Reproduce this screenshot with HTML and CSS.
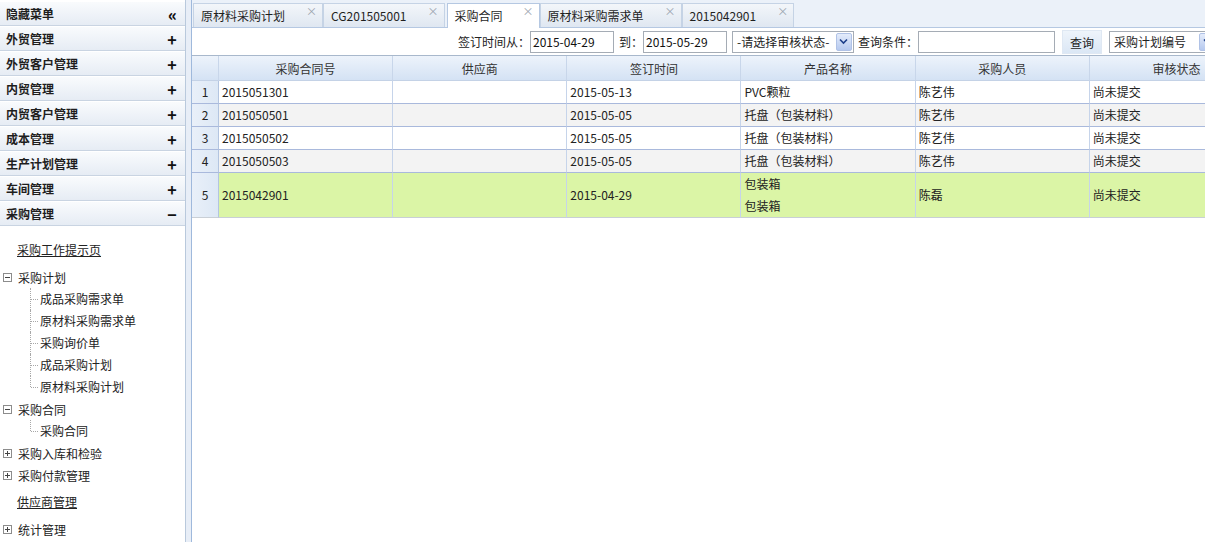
FILE: index.html
```html
<!DOCTYPE html>
<html lang="zh-CN">
<head>
<meta charset="utf-8">
<title>采购合同</title>
<link rel="stylesheet" href="styles.css">
</head>
<body>
<div class="app">
  <aside class="sidebar">
    <div class="menu-head"><span>隐藏菜单</span><span class="mh-icon dbl">«</span></div>
    <div class="menu-head"><span>外贸管理</span><span class="mh-icon">+</span></div>
    <div class="menu-head"><span>外贸客户管理</span><span class="mh-icon">+</span></div>
    <div class="menu-head"><span>内贸管理</span><span class="mh-icon">+</span></div>
    <div class="menu-head"><span>内贸客户管理</span><span class="mh-icon">+</span></div>
    <div class="menu-head"><span>成本管理</span><span class="mh-icon">+</span></div>
    <div class="menu-head"><span>生产计划管理</span><span class="mh-icon">+</span></div>
    <div class="menu-head"><span>车间管理</span><span class="mh-icon">+</span></div>
    <div class="menu-head"><span>采购管理</span><span class="mh-icon minus">−</span></div>
    <div class="tree">
      <div class="t-link">采购工作提示页</div>
      <div class="t-group">
        <svg class="t-box" width="9" height="9" viewBox="0 0 9 9"><rect x="0.5" y="0.5" width="8" height="8" fill="#fff" stroke="#8c8c8c"/><path d="M2 4.5h5" stroke="#444"/></svg>
        <span>采购计划</span>
      </div>
      <div class="t-children">
        <div class="t-item">成品采购需求单</div>
        <div class="t-item">原材料采购需求单</div>
        <div class="t-item">采购询价单</div>
        <div class="t-item">成品采购计划</div>
        <div class="t-item last">原材料采购计划</div>
      </div>
      <div class="t-group">
        <svg class="t-box" width="9" height="9" viewBox="0 0 9 9"><rect x="0.5" y="0.5" width="8" height="8" fill="#fff" stroke="#8c8c8c"/><path d="M2 4.5h5" stroke="#444"/></svg>
        <span>采购合同</span>
      </div>
      <div class="t-children">
        <div class="t-item last">采购合同</div>
      </div>
      <div class="t-group">
        <svg class="t-box" width="9" height="9" viewBox="0 0 9 9"><rect x="0.5" y="0.5" width="8" height="8" fill="#fff" stroke="#8c8c8c"/><path d="M2 4.5h5M4.5 2v5" stroke="#444"/></svg>
        <span>采购入库和检验</span>
      </div>
      <div class="t-group">
        <svg class="t-box" width="9" height="9" viewBox="0 0 9 9"><rect x="0.5" y="0.5" width="8" height="8" fill="#fff" stroke="#8c8c8c"/><path d="M2 4.5h5M4.5 2v5" stroke="#444"/></svg>
        <span>采购付款管理</span>
      </div>
      <div class="t-link">供应商管理</div>
      <div class="t-group">
        <svg class="t-box" width="9" height="9" viewBox="0 0 9 9"><rect x="0.5" y="0.5" width="8" height="8" fill="#fff" stroke="#8c8c8c"/><path d="M2 4.5h5M4.5 2v5" stroke="#444"/></svg>
        <span>统计管理</span>
      </div>
    </div>
  </aside>
  <div class="splitter"></div>
  <main class="main">
    <div class="tabs">
      <div class="tab">原材料采购计划<span class="tab-x">×</span></div>
      <div class="tab">CG201505001<span class="tab-x">×</span></div>
      <div class="tab active">采购合同<span class="tab-x">×</span></div>
      <div class="tab">原材料采购需求单<span class="tab-x">×</span></div>
      <div class="tab">2015042901<span class="tab-x">×</span></div>
    </div>
    <div class="toolbar">
      <span class="lbl">签订时间从：</span>
      <span class="inp w84">2015-04-29</span>
      <span class="lbl ml5">到：</span>
      <span class="inp w84">2015-05-29</span>
      <span class="sel w122 ml5">-请选择审核状态-<span class="sel-arrow"><svg width="9" height="7" viewBox="0 0 9 7"><path d="M1 1.5l3.5 3.5 3.5-3.5" fill="none" stroke="#1d3f8a" stroke-width="1.6"/></svg></span></span>
      <span class="lbl ml4">查询条件：</span>
      <span class="inp w137"></span>
      <span class="btn ml7">查询</span>
      <span class="sel w108 ml7 last">采购计划编号<span class="sel-arrow"><svg width="9" height="7" viewBox="0 0 9 7"><path d="M1 1.5l3.5 3.5 3.5-3.5" fill="none" stroke="#1d3f8a" stroke-width="1.6"/></svg></span></span>
    </div>
    <div class="grid-wrap">
      <table class="grid">
        <thead>
          <tr>
            <th class="rn"></th>
            <th class="c">采购合同号</th>
            <th class="c">供应商</th>
            <th class="c">签订时间</th>
            <th class="c">产品名称</th>
            <th class="c">采购人员</th>
            <th class="c">审核状态</th>
          </tr>
        </thead>
        <tbody>
          <tr>
            <td class="rn">1</td><td>2015051301</td><td></td><td>2015-05-13</td><td>PVC颗粒</td><td>陈艺伟</td><td>尚未提交</td>
          </tr>
          <tr class="alt">
            <td class="rn">2</td><td>2015050501</td><td></td><td>2015-05-05</td><td>托盘（包装材料）</td><td>陈艺伟</td><td>尚未提交</td>
          </tr>
          <tr>
            <td class="rn">3</td><td>2015050502</td><td></td><td>2015-05-05</td><td>托盘（包装材料）</td><td>陈艺伟</td><td>尚未提交</td>
          </tr>
          <tr class="alt">
            <td class="rn">4</td><td>2015050503</td><td></td><td>2015-05-05</td><td>托盘（包装材料）</td><td>陈艺伟</td><td>尚未提交</td>
          </tr>
          <tr class="sel-row">
            <td class="rn">5</td><td>2015042901</td><td></td><td>2015-04-29</td><td><div class="ln">包装箱</div><div class="ln">包装箱</div></td><td>陈磊</td><td>尚未提交</td>
          </tr>
        </tbody>
      </table>
    </div>
  </main>
</div>
</body>
</html>
```

FILE: styles.css
```css
* { box-sizing: border-box; }
html, body { margin: 0; padding: 0; }
body {
  font-family: "Noto Sans CJK SC", "Microsoft YaHei", sans-serif;
  font-size: 12px;
  color: #222;
  background: #fff;
  width: 1205px;
  height: 542px;
  overflow: hidden;
}
.app { display: flex; height: 542px; }

/* sidebar */
.sidebar {
  width: 186px;
  flex: none;
  border-right: 1px solid #b9c9dc;
  padding-top: 1px;
  background: #fff;
  overflow: hidden;
}
.menu-head {
  height: 25px;
  display: flex;
  align-items: center;
  justify-content: space-between;
  padding: 0 7px 0 6px;
  font-weight: bold;
  color: #1e1e1e;
  background: linear-gradient(#f9fbfd, #e6ecf4);
  border-top: 1px solid #fff;
  border-bottom: 1px solid #c9d4e2;
}
.mh-icon { font-size: 16px; font-weight: bold; width: 12px; text-align: center; color: #111; line-height: 1; }
.mh-icon.dbl { font-size: 16px; font-weight: 900; letter-spacing: -1px; }
.mh-icon.minus { font-size: 16px; }

.tree { padding-top: 8px; }
.t-link {
  height: 22px;
  line-height: 22px;
  margin: 5px 0;
  padding-left: 17px;
  text-decoration: underline;
  color: #222;
}
.t-group {
  height: 22px;
  display: flex;
  align-items: center;
  padding-left: 3px;
  color: #222;
}
.t-box { margin-right: 6px; flex: none; }
.t-children { padding-left: 30px; }
.t-item {
  position: relative;
  height: 22px;
  line-height: 22px;
  padding-left: 10px;
}
.t-item::before {
  content: "";
  position: absolute;
  left: 0;
  top: 0;
  bottom: 0;
  border-left: 1px dotted #a8a8a8;
}
.t-item.last::before { bottom: 11px; }
.t-item::after {
  content: "";
  position: absolute;
  left: 1px;
  top: 11px;
  width: 7px;
  border-top: 1px dotted #a8a8a8;
}

.splitter {
  width: 6px;
  flex: none;
  background: #e8eef7;
  border-right: 1px solid #9fb9dc;
}

/* main */
.main {
  flex: 1;
  min-width: 0;
  overflow: hidden;
  display: flex;
  flex-direction: column;
}
.tabs {
  height: 28px;
  flex: none;
  display: flex;
  align-items: flex-end;
  gap: 0;
  padding-left: 1px;
  background: #ebf1f9;
  border-bottom: 1px solid #b5c8e2;
}
.tab {
  position: relative;
  height: 24px;
  line-height: 24px;
  padding: 0 37px 0 7px;
  white-space: nowrap;
  color: #1f1f1f;
  background: linear-gradient(#f3f6fa, #dfe7f1);
  border: 1px solid #c5d3e5;
  border-bottom: none;
}
.tab.active {
  background: #fff;
  height: 25px;
  margin-bottom: -1px;
  margin-left: 2px;
  padding-right: 36px;
  border-color: #b5c8e2;
}
.tab-x {
  position: absolute;
  right: 5px;
  top: -5px;
  font-size: 11px;
  color: #9aa3ae;
}

.toolbar {
  height: 28px;
  flex: none;
  display: flex;
  align-items: center;
  justify-content: flex-end;
  margin-right: -12px;
  border-bottom: 1px solid #a8b8cc;
  white-space: nowrap;
}
.lbl { color: #222; }
.inp {
  height: 22px;
  line-height: 20px;
  border: 1px solid #a5acb5;
  padding: 0 2px;
  background: #fff;
  color: #111;
}
.w84 { width: 84px; }
.w137 { width: 137px; }
.w122 { width: 122px; }
.w108 { width: 108px; }
.ml4 { margin-left: 4px; }
.ml5 { margin-left: 5px; }
.ml7 { margin-left: 7px; }
.sel {
  position: relative;
  height: 22px;
  line-height: 20px;
  border: 1px solid #a5acb5;
  padding: 0 20px 0 4px;
  background: #fff;
  color: #222;
  flex: none;
}
.sel-arrow {
  position: absolute;
  right: 1px;
  top: 1px;
  width: 16px;
  height: 18px;
  display: flex;
  align-items: center;
  justify-content: center;
  background: linear-gradient(#e4ecfb, #b6c9ef);
  border: 1px solid #b0c2e6;
  border-radius: 2px;
}
.btn {
  width: 40px;
  height: 24px;
  line-height: 24px;
  text-align: center;
  background: linear-gradient(#eef4fb, #dbe7f5);
  border: 1px solid #dfe8f3;
  color: #222;
}

.grid-wrap { flex: 1; overflow: hidden; }
.grid {
  border-collapse: separate;
  border-spacing: 0;
  table-layout: fixed;
  width: 1072px;
}
.grid th, .grid td {
  box-sizing: border-box;
  padding: 0 3px;
  white-space: nowrap;
  overflow: hidden;
  border-right: 1px solid #c6d4ea;
  border-bottom: 1px solid #a9b9dc;
  text-align: left;
  font-weight: normal;
}
.grid th {
  height: 25px;
  text-align: center;
  color: #333;
  background: linear-gradient(#edf3fb, #d4e2f4);
  border-right-color: #c8d6ea;
  border-bottom-color: #c4d2e6;
}
.grid th.rn { width: 27px; }
.grid th.c { width: 174px; }
.grid td { height: 23px; line-height: 22px; }
.grid td.rn {
  text-align: center;
  padding: 0;
  color: #222;
  background: linear-gradient(90deg, #e9f0f9, #dde8f5);
  border-right-color: #b3c5e0;
}
.grid tr.alt td { background: #f3f3f3; }
.grid tr.alt td.rn { background: linear-gradient(90deg, #e9f0f9, #dde8f5); }
.grid tr.sel-row td { background: #dbf5a6; height: 45px; border-bottom-color: #c9cfd6; }
.grid tr.sel-row td.rn { background: linear-gradient(90deg, #e9f0f9, #dde8f5); }
.ln { height: 22px; line-height: 22px; }
```
